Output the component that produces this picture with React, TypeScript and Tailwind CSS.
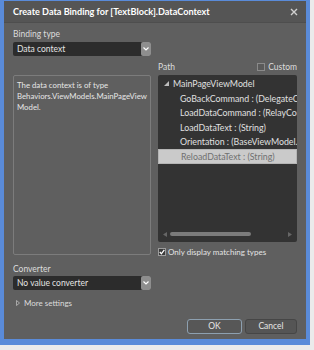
import React from "react";

const font = { fontFamily: 'Lato, "Noto Sans", sans-serif' };

function Chevron() {
  return (
    <div className="w-[10px] h-[14px] bg-[#8e8e8e] rounded-[2px] flex items-center justify-center">
      <svg width="6" height="4" viewBox="0 0 6 4">
        <path d="M0.5 0.5 L3 3 L5.5 0.5" stroke="#ffffff" strokeWidth="1.2" fill="none" />
      </svg>
    </div>
  );
}

function Dropdown({ text }: { text: string }) {
  return (
    <div className="w-[138px] h-[14px] flex bg-[#2c2c2c] rounded-[2px]">
      <div className="flex-1 text-[8.5px] leading-[14px] pl-[4px] text-[#e4e4e4]">{text}</div>
      <Chevron />
    </div>
  );
}

export default function App() {
  const rows = [
    "GoBackCommand : (DelegateCommand)",
    "LoadDataCommand : (RelayCommand)",
    "LoadDataText : (String)",
    "Orientation : (BaseViewModel.Orientation)",
  ];
  return (
    <div className="w-[314px] h-[350px] bg-[#ebebeb]" style={font}>
      <div className="w-[310px] h-[345px] bg-[#5a8bd9] pt-[1px] pl-[4px] pr-[4px] pb-[6px] flex">
        <div className="flex-1 bg-[#5f5f5f] flex flex-col">
          {/* title bar */}
          <div className="h-[22px] shrink-0 bg-[#555555] flex items-center pl-[9px] pr-[8px] border-b border-[#4e4e4e]">
            <div className="flex-1 text-[9.1px] font-bold text-white whitespace-nowrap">
              Create Data Binding for [TextBlock].DataContext
            </div>
            <svg width="8" height="8" viewBox="0 0 8 8">
              <path d="M1 1 L7 7 M7 1 L1 7" stroke="#d0d0d0" strokeWidth="1.4" />
            </svg>
          </div>
          <div className="flex flex-col pl-[9px] pr-[9px]">
            <div className="h-[19px] pt-[5px] text-[8.5px] leading-[13px] text-[#dcdcdc]">Binding type</div>
            <Dropdown text="Data context" />
            <div className="flex gap-[7px]">
              <div className="w-[138px] pt-[19px]">
                <div className="h-[180px] border border-[#7c7c7c] rounded-[2px] pl-[3px] pt-[4px] text-[7.8px] leading-[11px] text-[#e6e6e6]">
                  The data context is of type<br />Behaviors.ViewModels.MainPageView<br />Model.
                </div>
              </div>
              <div className="w-[139px] flex flex-col">
                <div className="h-[19px] flex items-end pb-[3px]">
                  <div className="flex-1 text-[8.5px] leading-[10px] text-[#dcdcdc]">Path</div>
                  <div className="w-[8px] h-[8px] border border-[#8a8a8a] bg-[#5a5a5a] mr-[3px] mb-[1px]"></div>
                  <div className="text-[8.5px] leading-[10px] text-[#dcdcdc]">Custom</div>
                </div>
                <div className="h-[167px] bg-[#333333] rounded-[2px] flex flex-col overflow-hidden">
                  <div className="flex flex-col pt-[1px]">
                    <div className="h-[15px] flex items-center pl-[6px] text-[8.8px] text-[#e0e0e0] whitespace-nowrap">
                      <svg width="5" height="5" viewBox="0 0 5 5" className="mr-[4px]">
                        <path d="M5 0 L5 5 L0 5 Z" fill="#bdbdbd" />
                      </svg>
                      MainPageViewModel
                    </div>
                    {rows.map((r) => (
                      <div key={r} className="h-[14.6px] flex items-center pl-[22px] text-[8.8px] text-[#e0e0e0] whitespace-nowrap overflow-hidden">
                        {r}
                      </div>
                    ))}
                    <div className="h-[15px] flex items-center pl-[22px] text-[8.8px] text-[#707070] bg-[#cacaca] border border-[#b5b5b5]">
                      ReloadDataText : (String)
                    </div>
                  </div>
                  <div className="flex-1"></div>
                  <div className="h-[12px] flex items-center px-[5px] gap-[3px] mb-[2px]">
                    <svg width="4" height="5" viewBox="0 0 4 5">
                      <path d="M4 0 L0 2.5 L4 5 Z" fill="#666" />
                    </svg>
                    <div className="w-[81px] h-[4px] rounded-full bg-[#7b7b7b]"></div>
                    <div className="flex-1"></div>
                    <svg width="4" height="5" viewBox="0 0 4 5">
                      <path d="M0 0 L4 2.5 L0 5 Z" fill="#666" />
                    </svg>
                  </div>
                </div>
                <div className="h-[13px] flex items-center mt-[3px]">
                  <div className="w-[8px] h-[8px] border border-[#9c9c9c] bg-[#3a3a3a] mr-[2px] flex items-center justify-center">
                    <svg width="6" height="6" viewBox="0 0 6 6">
                      <path d="M0.8 3 L2.4 4.8 L5.3 0.8" stroke="#ffffff" strokeWidth="1.3" fill="none" />
                    </svg>
                  </div>
                  <div className="text-[8px] text-[#e4e4e4] whitespace-nowrap">Only display matching types</div>
                </div>
              </div>
            </div>
            <div className="h-[18px] pt-[5px] text-[8.5px] leading-[12px] text-[#dcdcdc]">Converter</div>
            <Dropdown text="No value converter" />
            <div className="h-[16px] mt-[5px] flex items-center pl-[3px] text-[8px] text-[#dcdcdc]">
              <svg width="4" height="6" viewBox="0 0 4 6" className="mr-[4px]">
                <path d="M0.5 0.5 L3.5 3 L0.5 5.5 Z" stroke="#bbbbbb" strokeWidth="0.8" fill="none" />
              </svg>
              More settings
            </div>
            <div className="flex justify-end gap-[3px] mt-[8px]">
              <div className="w-[55px] h-[15px] border border-[#8da0b0] bg-[#575757] rounded-[3px] text-[8.5px] leading-[13px] text-center text-[#e6e6e6]">OK</div>
              <div className="w-[52px] h-[15px] border border-[#464646] bg-[#555555] rounded-[3px] text-[8.5px] leading-[13px] text-center text-[#e6e6e6]">Cancel</div>
            </div>
          </div>
        </div>
      </div>
    </div>
  );
}
